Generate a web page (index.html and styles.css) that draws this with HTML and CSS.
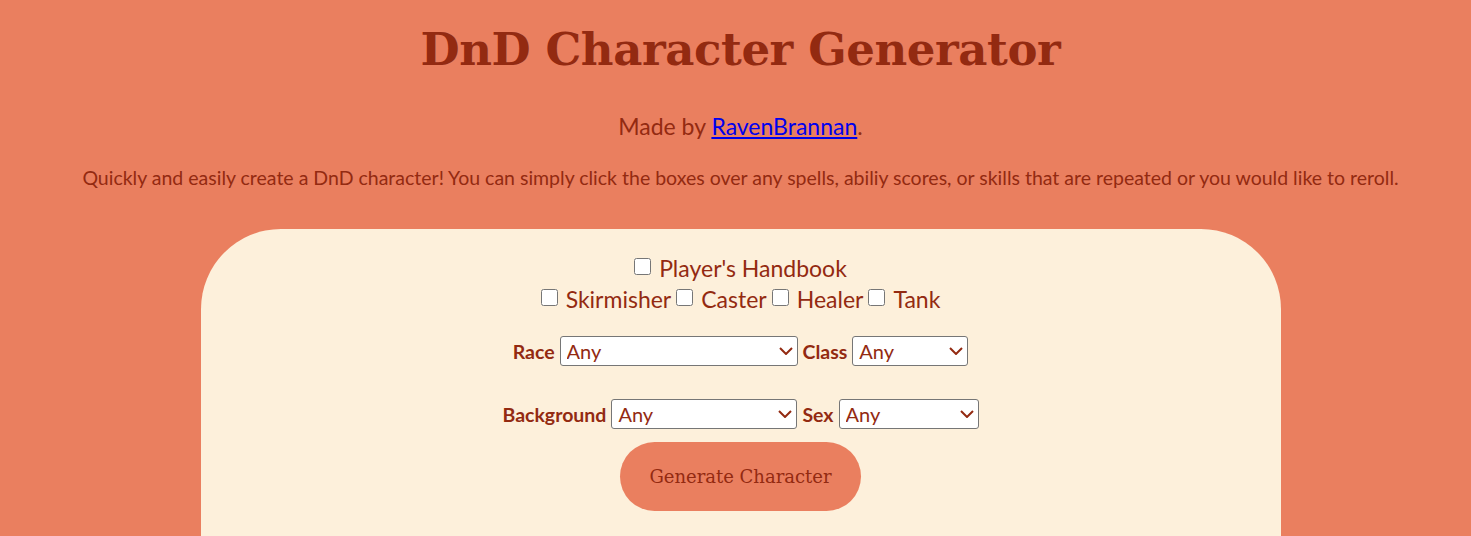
FILE: index.html
```html
<!DOCTYPE html>
<html>
<head>
<meta charset="utf-8">
<title>DnD Character Generator</title>
<link rel="stylesheet" href="styles.css">
</head>
<body>
<h1 class="title">DnD Character Generator</h1>
<p class="made">Made by <a href="#">RavenBrannan</a>.</p>
<p class="desc">Quickly and easily create a DnD character! You can simply click the boxes over any spells, abiliy scores, or skills that are repeated or you would like to reroll.</p>
<div class="card">
  <div class="checks">
    <div class="check-row">
      <label class="check"><input type="checkbox"><span>Player's Handbook</span></label>
    </div>
    <div class="check-row">
      <label class="check"><input type="checkbox"><span>Skirmisher</span></label>
      <label class="check"><input type="checkbox"><span>Caster</span></label>
      <label class="check"><input type="checkbox"><span>Healer</span></label>
      <label class="check"><input type="checkbox"><span>Tank</span></label>
    </div>
  </div>
  <div class="field-row row-one">
    <label class="field-label">Race</label>
    <span class="sel-wrap sel-race"><select class="sel"><option>Any</option></select><svg class="chev" viewBox="0 0 14 8" width="14" height="8"><path d="M1 1 L7 7 L13 1" fill="none" stroke="currentColor" stroke-width="2"/></svg></span>
    <label class="field-label">Class</label>
    <span class="sel-wrap sel-class"><select class="sel"><option>Any</option></select><svg class="chev" viewBox="0 0 14 8" width="14" height="8"><path d="M1 1 L7 7 L13 1" fill="none" stroke="currentColor" stroke-width="2"/></svg></span>
  </div>
  <div class="field-row row-two">
    <label class="field-label">Background</label>
    <span class="sel-wrap sel-bg"><select class="sel"><option>Any</option></select><svg class="chev" viewBox="0 0 14 8" width="14" height="8"><path d="M1 1 L7 7 L13 1" fill="none" stroke="currentColor" stroke-width="2"/></svg></span>
    <label class="field-label">Sex</label>
    <span class="sel-wrap sel-sex"><select class="sel"><option>Any</option></select><svg class="chev" viewBox="0 0 14 8" width="14" height="8"><path d="M1 1 L7 7 L13 1" fill="none" stroke="currentColor" stroke-width="2"/></svg></span>
  </div>
  <button class="gen-btn">Generate Character</button>
</div>
</body>
</html>
```
FILE: styles.css
```css
html, body {
  margin: 0;
  padding: 0;
}
body {
  background: #ea7f5f;
  color: #932a11;
  font-family: Lato, "Noto Sans", sans-serif;
  text-align: center;
  height: 536px;
  overflow: hidden;
  padding-left: 10px;
}
.title {
  font-family: "DejaVu Serif", Georgia, serif;
  font-weight: bold;
  font-size: 45px;
  line-height: 56px;
  margin: 22px 0 0;
  letter-spacing: -0.4px;
}
.made {
  font-size: 23px;
  line-height: 28px;
  margin: 34px 0 0;
}
.made a {
  color: #0000ee;
}
.desc {
  font-size: 19.5px;
  line-height: 26px;
  margin: 25px 0 0;
}
.card {
  width: 1080px;
  margin: 38px auto 0;
  background: #fdf0db;
  border-radius: 80px 80px 0 0;
  height: 400px;
  padding-top: 25px;
  box-sizing: border-box;
}
.checks {
  display: flex;
  flex-direction: column;
  align-items: center;
  gap: 2px;
}
.check-row {
  display: flex;
  justify-content: center;
  gap: 5px;
  font-size: 23px;
  line-height: 29px;
}
.check {
  display: inline-flex;
  align-items: center;
}
.check input {
  width: 17px;
  height: 17px;
  margin: 0 8px 5px 0;
}
.field-row {
  display: flex;
  justify-content: center;
  align-items: center;
  gap: 5px;
}
.row-one {
  margin-top: 22px;
}
.row-two {
  margin-top: 33px;
}
.field-label {
  font-weight: bold;
  font-size: 19.5px;
}
.sel-wrap {
  position: relative;
  display: inline-block;
  height: 30px;
  color: #932a11;
}
.sel {
  display: block;
  width: 100%;
  height: 30px;
  -webkit-appearance: none;
  appearance: none;
  font-family: Lato, "Noto Sans", sans-serif;
  font-size: 20px;
  color: #932a11;
  background: #fff;
  border: 1px solid #767676;
  border-radius: 3px;
  padding: 0 6px;
  text-align: left;
}
.chev {
  position: absolute;
  right: 5px;
  top: 11px;
  pointer-events: none;
}
.sel-race { width: 238px; }
.sel-class { width: 116px; }
.sel-bg { width: 186px; }
.sel-sex { width: 140px; }
.gen-btn {
  display: block;
  margin: 13px auto 0;
  width: 241px;
  height: 69px;
  border: none;
  border-radius: 35px;
  background: #ea7f5f;
  color: #932a11;
  font-family: "DejaVu Serif", Georgia, serif;
  font-size: 18px;
}
```
